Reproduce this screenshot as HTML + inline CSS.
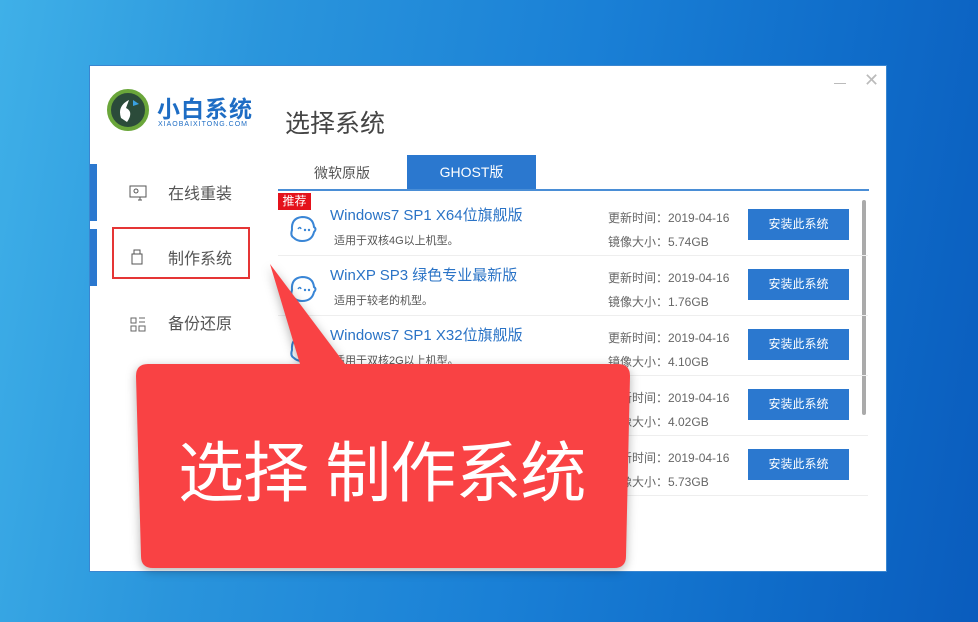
<!DOCTYPE html>
<html><head><meta charset="utf-8"><style>
*{margin:0;padding:0;box-sizing:border-box}
body{width:978px;height:622px;overflow:hidden;position:relative;font-family:"Liberation Sans","Noto Sans CJK SC",sans-serif;
background:linear-gradient(100deg,#3fb0e8 0%,#2a95dc 25%,#1a80d6 55%,#0f6cc9 80%,#0a5cbd 100%)}
.win{position:absolute;left:89px;top:65px;width:798px;height:507px;background:#fff;border:1px solid #3a86d0}
.a{position:absolute}
.side{color:#555;font-size:16px}
.row{position:absolute;left:278px;width:590px;height:60px;border-bottom:1px solid #eee}
.t{position:absolute;left:52px;top:8px;color:#2a73c6;font-size:15px;white-space:nowrap}
.s{position:absolute;left:56px;top:36px;color:#555;font-size:11px}
.m{position:absolute;left:330px;top:10px;color:#666;font-size:12px;line-height:24px;white-space:nowrap}
.b{position:absolute;left:470px;top:13px;width:101px;height:31px;background:#2b78cf;color:#fff;font-size:12px;text-align:center;line-height:31px}
.ic{position:absolute;left:10px;top:16px}
</style></head><body>
<div class="win">
 <svg class="a" style="left:17px;top:22px" width="42" height="44" viewBox="0 0 42 44"><circle cx="21" cy="22" r="19" fill="#2b4b3a"/><circle cx="21" cy="22" r="19" fill="none" stroke="#6aa63a" stroke-width="4"/><path d="M14 30 Q10 18 22 12 L19 20 Q27 24 20 34Z" fill="#fff"/><path d="M26 12 l6 4 -6 2z" fill="#3aa0e0"/></svg>
 <div class="a" style="left:67px;top:24px;color:#1e6dc4;font-size:23px;font-weight:bold;letter-spacing:1px">小白系统</div>
 <div class="a" style="left:68px;top:55px;color:#1e6dc4;font-size:7px;letter-spacing:1px">XIAOBAIXITONG.COM</div>
 <div class="a" style="left:195px;top:38px;color:#444;font-size:25px">选择系统</div>
 <div class="a" style="left:744px;top:17px;width:12px;height:1px;background:#bbb"></div>
 <div class="a" style="left:774px;top:4px;color:#bbb;font-size:18px">✕</div>
 <div class="a" style="left:0;top:98px;width:7px;height:57px;background:#2b78cf"></div>
 <div class="a" style="left:0;top:163px;width:7px;height:57px;background:#2b78cf"></div>
 <svg class="a" style="left:39px;top:119px" width="18" height="16"><rect x="1" y="1" width="16" height="11" fill="none" stroke="#555"/><circle cx="7" cy="6" r="2" fill="none" stroke="#555"/><path d="M9 15h4M11 12v3" stroke="#555"/></svg>
 <div class="a side" style="left:78px;top:114px">在线重装</div>
 <div class="a" style="left:22px;top:161px;width:138px;height:52px;border:2px solid #e53535"></div>
 <svg class="a" style="left:41px;top:183px" width="12" height="16"><rect x="1" y="5" width="10" height="10" fill="none" stroke="#555"/><rect x="3" y="1" width="6" height="4" fill="none" stroke="#555"/></svg>
 <div class="a side" style="left:78px;top:179px">制作系统</div>
 <svg class="a" style="left:40px;top:250px" width="16" height="16"><path d="M1 2h5v5H1zM1 10h5v5H1zM9 2h6M9 6h6M9 10h6v5H9z" fill="none" stroke="#666"/></svg>
 <div class="a side" style="left:78px;top:244px">备份还原</div>
 <div class="a" style="left:224px;top:97px;color:#555;font-size:14px">微软原版</div>
 <div class="a" style="left:317px;top:89px;width:129px;height:35px;background:#2b78cf;color:#fff;font-size:14px;text-align:center;line-height:35px">GHOST版</div>
 <div class="a" style="left:188px;top:123px;width:591px;height:2px;background:#4a8ed6"></div>
 <div class="a" style="left:772px;top:134px;width:4px;height:215px;background:#aaa;border-radius:2px"></div>
</div>
<div class="a" style="left:278px;top:193px;width:33px;height:17px;background:#e4121b;color:#fff;font-size:12px;text-align:center;line-height:17px;z-index:2">推荐</div>
<svg width="0" height="0" style="position:absolute"><defs><g id="f"><path d="M6 26 Q2 24 4 18 Q3 6 14 5 Q25 5 26 15 Q29 17 26 20 Q24 29 14 29 Q9 29 6 26Z" fill="none" stroke="#3a86d6" stroke-width="2"/><path d="M10 17 q2 -3 3 0" fill="none" stroke="#3a86d6" stroke-width="1.5"/><circle cx="17" cy="18" r="1.2" fill="#3a86d6"/><circle cx="21" cy="18" r="1.2" fill="#3a86d6"/></g></defs></svg>
<div class="row" style="top:196px"><svg class="ic" width="32" height="32"><use href="#f"/></svg><div class="t">Windows7 SP1 X64位旗舰版</div><div class="s">适用于双核4G以上机型。</div><div class="m">更新时间：2019-04-16<br>镜像大小：5.74GB</div><div class="b">安装此系统</div></div>
<div class="row" style="top:256px"><svg class="ic" width="32" height="32"><use href="#f"/></svg><div class="t">WinXP SP3 绿色专业最新版</div><div class="s">适用于较老的机型。</div><div class="m">更新时间：2019-04-16<br>镜像大小：1.76GB</div><div class="b">安装此系统</div></div>
<div class="row" style="top:316px"><svg class="ic" width="32" height="32"><use href="#f"/></svg><div class="t">Windows7 SP1 X32位旗舰版</div><div class="s">适用于双核2G以上机型。</div><div class="m">更新时间：2019-04-16<br>镜像大小：4.10GB</div><div class="b">安装此系统</div></div>
<div class="row" style="top:376px"><svg class="ic" width="32" height="32"><use href="#f"/></svg><div class="t">Windows10 64位专业版</div><div class="s">适用于双核4G以上机型。</div><div class="m">更新时间：2019-04-16<br>镜像大小：4.02GB</div><div class="b">安装此系统</div></div>
<div class="row" style="top:436px"><svg class="ic" width="32" height="32"><use href="#f"/></svg><div class="t">Windows8 64位专业版</div><div class="s">适用于双核4G以上机型。</div><div class="m">更新时间：2019-04-16<br>镜像大小：5.73GB</div><div class="b">安装此系统</div></div>
<svg class="a" style="left:0;top:0;filter:drop-shadow(0 3px 5px rgba(0,0,0,.3))" width="978" height="622"><path d="M270 264 L345 364 L618 364 Q630 364 630 376 L626 556 Q626 568 614 568 L153 568 Q141 568 141 556 L136 376 Q136 364 148 364 L300 364 Z" fill="#f94244"/></svg>
<div class="a" style="left:178px;top:420px;color:#fff;font-size:66px;white-space:nowrap;letter-spacing:-1px">选择 制作系统</div>
</body></html>
